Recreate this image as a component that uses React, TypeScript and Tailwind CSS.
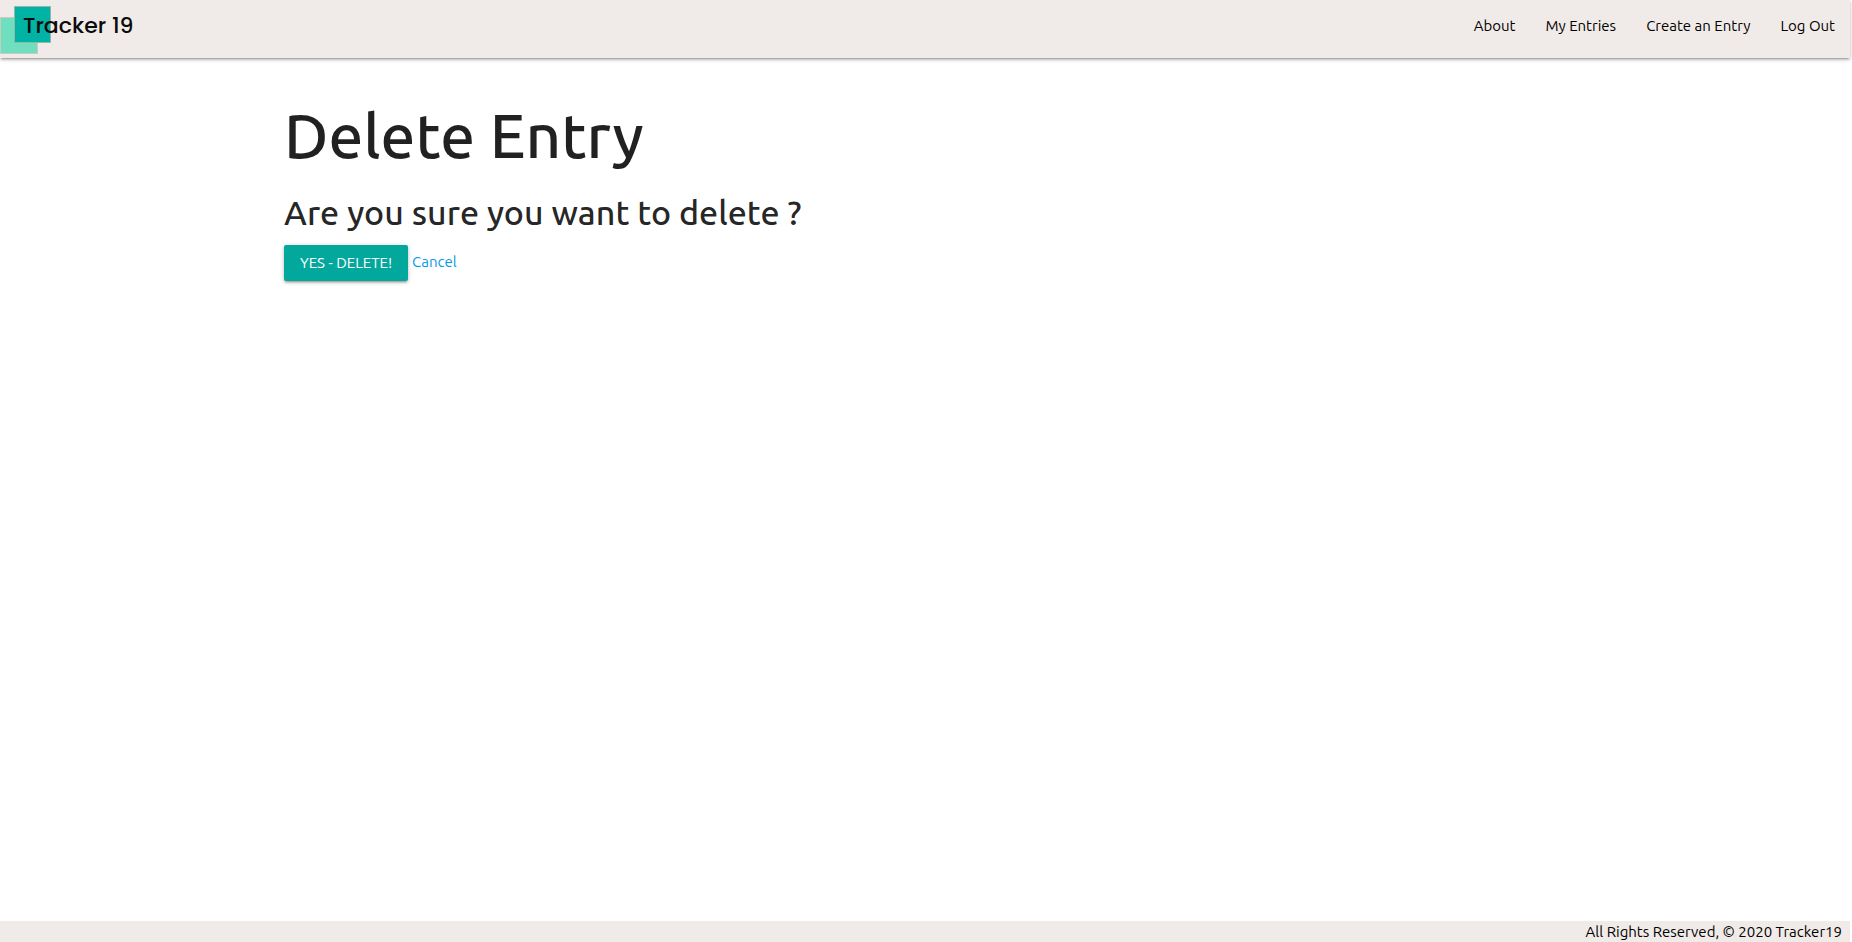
const links = ["About", "My Entries", "Create an Entry", "Log Out"];

function Logo() {
  return (
    <a href="#home" aria-label="Tracker 19" className="block h-14">
      <svg width="140" height="56" viewBox="0 0 140 56">
        <rect x="0.5" y="17.5" width="37" height="36" fill="#70dfc0" stroke="#c5cdbd" />
        <rect x="14.5" y="6.5" width="36" height="36" fill="#00b3a4" stroke="#8fb9a5" />
        <text x="23" y="33" fontSize="22" fontWeight="500" fill="#0b0b0b" className="font-['Poppins','Inter',sans-serif]">
          Tracker 19
        </text>
      </svg>
    </a>
  );
}

export default function App() {
  return (
    <div className="flex min-h-screen flex-col bg-white font-['Ubuntu','Noto_Sans',sans-serif] text-[15px] text-black/87">
      <header className="mr-0.5 flex h-[58px] items-start justify-between bg-[#f0ebe8] shadow-[0_2px_2px_0_rgba(0,0,0,0.14),0_3px_1px_-2px_rgba(0,0,0,0.12),0_1px_5px_0_rgba(0,0,0,0.2)]">
        <Logo />
        <nav className="flex text-black">
          {links.map((label) => (
            <a key={label} href="#" className="px-[15px] leading-[52px]">
              {label}
            </a>
          ))}
        </nav>
      </header>
      <main className="mx-auto w-full max-w-[1284px] flex-1 pt-[42px]">
        <h1 className="text-[62px] leading-[70px] font-medium">Delete Entry</h1>
        <h2 className="mt-6 text-[34px] leading-9 font-medium">Are you sure you want to delete ?</h2>
        <form className="mt-[15px] flex gap-1" onSubmit={(e) => e.preventDefault()}>
          <button
            type="submit"
            className="h-9 rounded-xs bg-[#03a89c] px-4 text-[15px] text-white uppercase shadow-[0_2px_2px_0_rgba(0,0,0,0.14),0_3px_1px_-2px_rgba(0,0,0,0.12),0_1px_5px_0_rgba(0,0,0,0.2)]"
          >
            Yes - Delete!
          </button>
          <a href="#entries" className="leading-[34px] text-[#039be5]">
            Cancel
          </a>
        </form>
      </main>
      <footer className="mr-0.5 bg-[#f0ebe8] pr-2 text-right leading-[21px] text-black">
        All Rights Reserved, © 2020 Tracker19
      </footer>
    </div>
  );
}
